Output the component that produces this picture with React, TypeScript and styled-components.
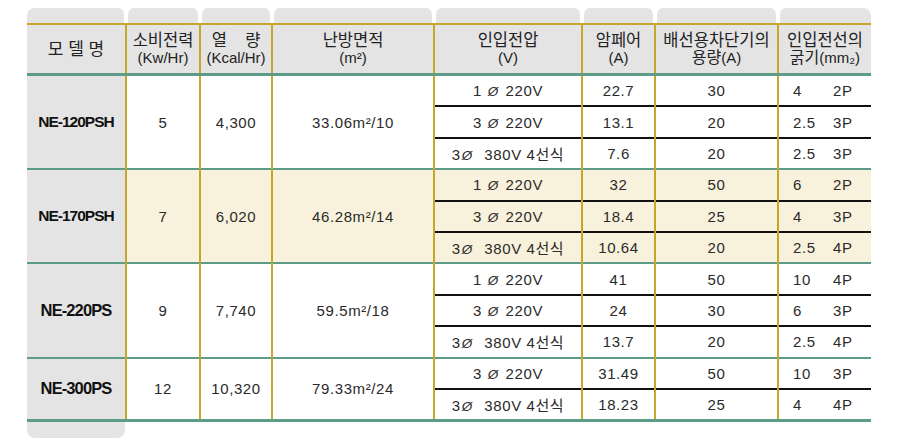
import styled, {createGlobalStyle} from "styled-components";

const GlobalStyle = createGlobalStyle`
  body {
    margin: 0;
    background: #ffffff;
    font-family: "Liberation Sans", "Noto Sans CJK KR", sans-serif;
    color: #222222;
  }
`;

const GOLD = "#c6a62c";
const TEAL = "#5c9c89";
const GRAY = "#e4e4e4";
const CREAM = "#f8f2dc";

const COLS = [99, 74, 72, 162, 148, 73, 123, 93];

const Page = styled.div`
  padding: 8px 0 0 27px;
  width: 844px;
`;

const TabRow = styled.div`
  display: flex;
  height: 15px;
`;

const Tab = styled.div<{ $w: number; $first?: boolean; $last?: boolean }>`
  box-sizing: border-box;
  width: ${props => props.$w}px;
  height: 15px;
  background: ${GRAY};
  background-clip: padding-box;
  border-left: ${props => (props.$first ? 0 : 2)}px solid transparent;
  border-right: ${props => (props.$last ? 0 : 2)}px solid transparent;
  border-radius: 7px 7px 0 0;
`;

const BottomTab = styled.div`
  width: 98px;
  height: 16px;
  background: ${GRAY};
  border-radius: 0 0 8px 8px;
`;

const Table = styled.table`
  width: 844px;
  table-layout: fixed;
  border-collapse: collapse;
`;

const Th = styled.th<{ $first?: boolean }>`
  height: 48px;
  padding: 0;
  background: ${GRAY};
  border-top: 2px solid ${GOLD};
  border-bottom: 3px solid ${TEAL};
  border-left: ${props => (props.$first ? "none" : `2px solid ${GOLD}`)};
  font-weight: normal;
  font-size: 15px;
  color: #222;
  white-space: pre;
  vertical-align: middle;
`;

const HeadLine = styled.span`
  display: block;
  height: 17px;
  line-height: 17px;
`;

// Hangul runs are drawn a little larger, like the Dotum face in the original
const Ko = styled.span<{ $size?: number }>`
  font-size: ${props => props.$size ?? 16.5}px;
  line-height: 17px;
`;

const Td = styled.td<{ $bg: string; $top: "teal" | "black"; $first?: boolean; $last?: boolean }>`
  height: 29.4px;
  padding: 0;
  background: ${props => props.$bg};
  text-align: center;
  vertical-align: middle;
  font-size: 15px;
  letter-spacing: 0.6px;
  color: #2a2a2a;
  border-top: 2px solid ${props => (props.$top === "teal" ? TEAL : "#111")};
  border-left: ${props => (props.$first ? "none" : `2px solid ${GOLD}`)};
  border-bottom: ${props => (props.$last ? `3px solid ${TEAL}` : "none")};
  white-space: pre;
`;

const Model = styled.span<{ $big?: boolean }>`
  font-weight: bold;
  font-size: ${props => (props.$big ? 16.5 : 15.5)}px;
  letter-spacing: ${props => (props.$big ? -0.9 : -1)}px;
  color: #111;
`;

const Phi = styled.span`
  font-style: italic;
  font-size: 13.5px;
  margin: 0 2px 0 1px;
`;

const Wire = styled.div`
  display: flex;
  padding-left: 14px;
  text-align: left;
`;

const WireSize = styled.span`
  width: 40px;
`;

interface Sub {
    phase: string;
    volt: string;
    amp: string;
    breaker: string;
    wire: string;
    pole: string;
}

interface Group {
    model: string;
    big?: boolean;
    power: string;
    heat: string;
    area: string;
    bg: string;
    rows: Sub[];
}

const sub = (phase: string, volt: string, amp: string, breaker: string, wire: string, pole: string): Sub => ({
    phase, volt, amp, breaker, wire, pole,
});

const ONE = ["1 ", " 220V"];
const THREE = ["3 ", " 220V"];
const THREE380 = ["3", "  380V 4선식"];

const groups: Group[] = [
    {
        model: "NE-120PSH", power: "5", heat: "4,300", area: "33.06m²/10", bg: "#ffffff",
        rows: [
            sub(ONE[0], ONE[1], "22.7", "30", "4", "2P"),
            sub(THREE[0], THREE[1], "13.1", "20", "2.5", "3P"),
            sub(THREE380[0], THREE380[1], "7.6", "20", "2.5", "3P"),
        ],
    },
    {
        model: "NE-170PSH", power: "7", heat: "6,020", area: "46.28m²/14", bg: CREAM,
        rows: [
            sub(ONE[0], ONE[1], "32", "50", "6", "2P"),
            sub(THREE[0], THREE[1], "18.4", "25", "4", "3P"),
            sub(THREE380[0], THREE380[1], "10.64", "20", "2.5", "4P"),
        ],
    },
    {
        model: "NE-220PS", big: true, power: "9", heat: "7,740", area: "59.5m²/18", bg: "#ffffff",
        rows: [
            sub(ONE[0], ONE[1], "41", "50", "10", "4P"),
            sub(THREE[0], THREE[1], "24", "30", "6", "3P"),
            sub(THREE380[0], THREE380[1], "13.7", "20", "2.5", "4P"),
        ],
    },
    {
        model: "NE-300PS", big: true, power: "12", heat: "10,320", area: "79.33m²/24", bg: "#ffffff",
        rows: [
            sub(THREE[0], THREE[1], "31.49", "50", "10", "3P"),
            sub(THREE380[0], THREE380[1], "18.23", "25", "4", "4P"),
        ],
    },
];

const headers: [string, string][] = [
    ["모 델 명", ""],
    ["소비전력", "(Kw/Hr)"],
    ["열    량", "(Kcal/Hr)"],
    ["난방면적", "(m²)"],
    ["인입전압", "(V)"],
    ["암페어", "(A)"],
    ["배선용차단기의", "용량(A)"],
    ["인입전선의", "굵기(mm₂)"],
];

// split a label so that the Hangul parts get the larger size
const label = (text: string, size?: number) =>
    text.split(/([가-힣][가-힣\s]*[가-힣]|[가-힣])/).filter(Boolean).map((part, i) =>
        /[가-힣]/.test(part) ? <Ko key={i} $size={size}>{part}</Ko> : <span key={i}>{part}</span>
    );

function App() {
    return (
        <Page>
            <GlobalStyle/>
            <TabRow>
                {COLS.map((w, i) => (
                    <Tab key={i} $w={w} $first={i === 0} $last={i === COLS.length - 1}/>
                ))}
            </TabRow>
            <Table>
                <colgroup>
                    {COLS.map((w, i) => <col key={i} style={{width: w}}/>)}
                </colgroup>
                <thead>
                <tr>
                    {headers.map(([a, b], i) => (
                        <Th key={i} $first={i === 0}>
                            <HeadLine>{label(a, i === 0 ? 17 : 16.5)}</HeadLine>
                            {b && <HeadLine>{label(b, 16)}</HeadLine>}
                        </Th>
                    ))}
                </tr>
                </thead>
                <tbody>
                {groups.map((g, gi) => {
                    const lastGroup = gi === groups.length - 1;
                    const n = g.rows.length;
                    return g.rows.map((r, ri) => {
                        const top = ri === 0 ? "teal" : "black";
                        const last = lastGroup && ri === n - 1;
                        return (
                            <tr key={`${gi}-${ri}`}>
                                {ri === 0 && (
                                    <>
                                        <Td rowSpan={n} $bg={GRAY} $top="teal" $first $last={lastGroup}>
                                            <Model $big={g.big}>{g.model}</Model>
                                        </Td>
                                        <Td rowSpan={n} $bg={g.bg} $top="teal" $last={lastGroup}>{g.power}</Td>
                                        <Td rowSpan={n} $bg={g.bg} $top="teal" $last={lastGroup}>{g.heat}</Td>
                                        <Td rowSpan={n} $bg={g.bg} $top="teal" $last={lastGroup}>{g.area}</Td>
                                    </>
                                )}
                                <Td $bg={g.bg} $top={top} $last={last}>
                                    {r.phase}<Phi>Ø</Phi>{r.volt}
                                </Td>
                                <Td $bg={g.bg} $top={top} $last={last}>{r.amp}</Td>
                                <Td $bg={g.bg} $top={top} $last={last}>{r.breaker}</Td>
                                <Td $bg={g.bg} $top={top} $last={last}>
                                    <Wire>
                                        <WireSize>{r.wire}</WireSize>
                                        <span>{r.pole}</span>
                                    </Wire>
                                </Td>
                            </tr>
                        );
                    });
                })}
                </tbody>
            </Table>
            <BottomTab/>
        </Page>
    );
}

export default App;
